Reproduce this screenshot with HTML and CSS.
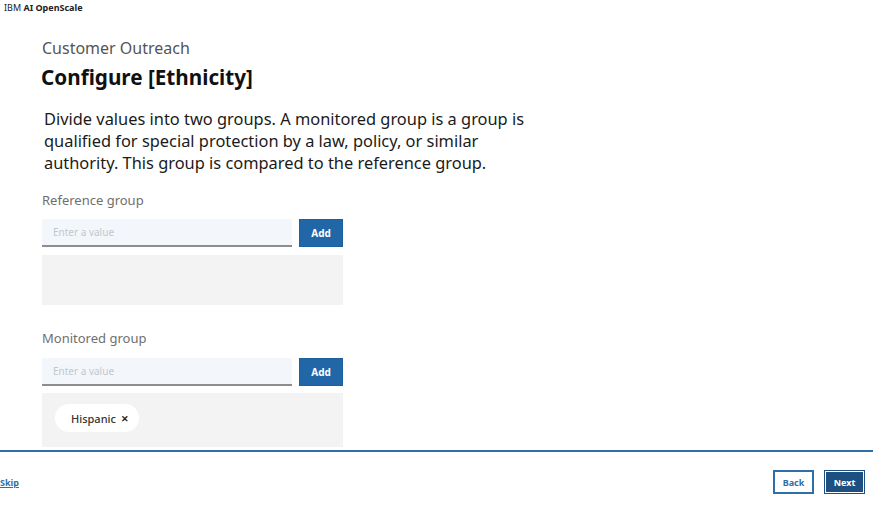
FILE: index.html
```html
<!DOCTYPE html>
<html lang="en">
<head>
<meta charset="utf-8">
<title>IBM AI OpenScale</title>
<link rel="stylesheet" href="styles.css">
</head>
<body>
<div class="page">
  <header class="topbar"><span class="brand-ibm">IBM</span> <span class="brand-name">AI OpenScale</span></header>
  <main class="content">
    <div class="app-name">Customer Outreach</div>
    <h1 class="title">Configure [Ethnicity]</h1>
    <p class="desc">Divide values into two groups. A monitored group is a group is qualified for special protection by a law, policy, or similar authority. This group is compared to the reference group.</p>

    <section class="group group-ref">
      <div class="label">Reference group</div>
      <div class="input-row">
        <div class="field">Enter a value</div>
        <button class="add-btn">Add</button>
      </div>
      <div class="tag-box"></div>
    </section>

    <section class="group group-mon">
      <div class="label">Monitored group</div>
      <div class="input-row">
        <div class="field">Enter a value</div>
        <button class="add-btn">Add</button>
      </div>
      <div class="tag-box tag-box-filled">
        <span class="tag">Hispanic <span class="tag-x">✕</span></span>
      </div>
    </section>
  </main>
  <div class="divider"></div>
  <footer class="footer">
    <a class="skip">Skip</a>
    <div class="actions">
      <button class="btn-back">Back</button>
      <button class="btn-next">Next</button>
    </div>
  </footer>
</div>
</body>
</html>
```
FILE: styles.css
```css
* { box-sizing: border-box; }
html, body { margin: 0; padding: 0; background: #fff; }
body {
  font-family: "Noto Sans", "Open Sans", Arial, sans-serif;
  color: #161616;
  width: 881px;
  height: 510px;
  overflow: hidden;
}
.page { display: flex; flex-direction: column; }
.topbar {
  height: 15px;
  padding-left: 4px;
  font-size: 9px;
  line-height: 15px;
  color: #222;
}
.brand-name { font-weight: 700; }

.content {
  padding-left: 42px;
  height: 435px;
  display: flex;
  flex-direction: column;
}
.app-name {
  margin-top: 22px;
  font-size: 16px;
  line-height: 22px;
  color: #555;
}
.title {
  margin: 5px 0 0 -1px;
  font-size: 20.7px;
  line-height: 26px;
  font-weight: 700;
  color: #111;
}
.desc {
  margin: 18px 0 0 2px;
  width: 500px;
  font-size: 16.4px;
  line-height: 22px;
  color: #1a1a1a;
}
.group { width: 301px; }
.group-ref { margin-top: 17px; }
.group-mon { margin-top: 24px; }
.label {
  font-size: 13px;
  line-height: 18px;
  color: #6f6f6f;
}
.input-row {
  margin-top: 10px;
  display: flex;
  gap: 7px;
  height: 28px;
}
.group-mon .input-row { margin-top: 11px; }
.field {
  flex: 0 0 250px;
  background: #f3f7fb;
  border-bottom: 2px solid #8d8d8d;
  font-size: 10px;
  line-height: 27px;
  padding-left: 11px;
  color: #c2c7cc;
}
.add-btn {
  flex: 0 0 44px;
  border: 1px solid #1e5f9e;
  background: #2167a8;
  color: #fff;
  font-family: inherit;
  font-size: 10px;
  font-weight: 700;
  padding: 0;
}
.tag-box {
  margin-top: 8px;
  height: 50px;
  background: #f3f3f3;
}
.tag-box-filled {
  margin-top: 7px;
  height: 54px;
  padding: 11px 0 0 13px;
}
.tag {
  display: inline-flex;
  align-items: center;
  gap: 5px;
  height: 28px;
  padding: 0 10px 0 16px;
  background: #fff;
  border-radius: 14px;
  font-size: 11px;
  color: #333;
  font-weight: 500;
}
.tag-x { font-size: 9px; font-weight: 700; color: #222; }

.divider {
  width: 873px;
  height: 2px;
  background: #2f6ea8;
}
.footer {
  height: 58px;
  display: flex;
  align-items: center;
  justify-content: space-between;
  padding-right: 16px;
}
.skip {
  margin-left: 0;
  margin-top: 2px;
  font-size: 9px;
  font-weight: 700;
  color: #2f6ea8;
  text-decoration: underline;
}
.actions { display: flex; gap: 10px; margin-top: 2px; }
.btn-back, .btn-next {
  width: 41px;
  height: 24px;
  font-family: inherit;
  font-size: 9px;
  font-weight: 700;
  padding: 0;
}
.btn-back {
  background: #fff;
  border: 2px solid #2f6ea8;
  color: #2f6ea8;
}
.btn-next {
  background: #1d4f80;
  color: #fff;
  border: 1px solid #1d4f80;
  box-shadow: inset 0 0 0 1px #fff;
}
```
